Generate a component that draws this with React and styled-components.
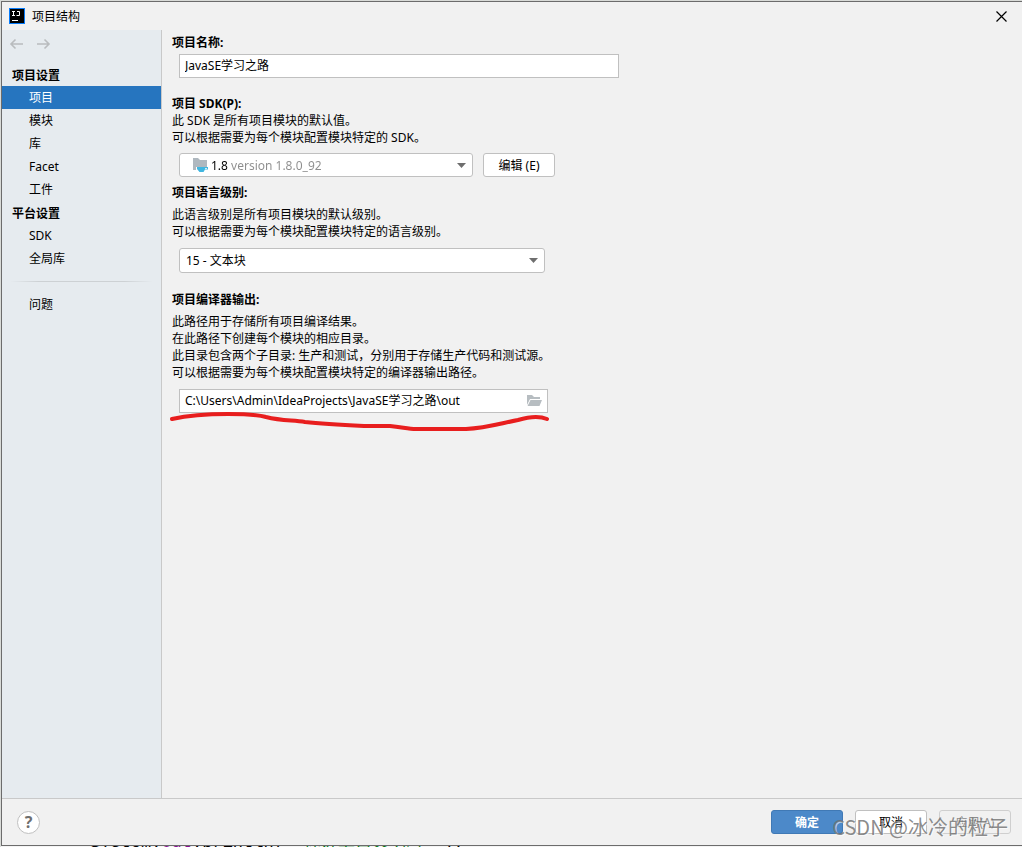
import { useState } from 'react'
import styled, { createGlobalStyle, css } from 'styled-components'

const GlobalStyle = createGlobalStyle`
  :root {
    --color-ui: #f1f1f1;
    --color-side: #e6ebef;
    --color-line: #c9c9c9;
    --color-border: #c0c0c0;
    --color-accent: #2675bf;
    --fs: 12px;
  }

  * {
    box-sizing: border-box;
  }

  body {
    margin: 0;
    color: #000;
    background-color: #d9dbd8;
    font-family: 'Noto Sans', 'Noto Sans CJK SC', sans-serif;
    font-size: var(--fs);
    line-height: 17px;
  }

  button, input, select {
    margin: 0;
    color: inherit;
    font: inherit;
  }
`

const Desktop = styled.div`
  display: flex;
  flex-direction: column;
  height: 100vh;
  padding: 1px 0 0 1px;
  overflow: hidden;
`

const Dialog = styled.div`
  position: relative;
  display: flex;
  flex: 1;
  flex-direction: column;
  min-height: 0;
  border: 1px solid #6c6c6c;
  border-right: 0;
  background-color: var(--color-ui);
`

// the editor line that shows under the dialog
const CodeStrip = styled.div`
  display: flex;
  align-items: flex-end;
  height: 1px;
  padding-left: 89px;
  overflow: hidden;
  background-color: #f4f4f4;
  font-family: 'Liberation Mono', 'Noto Sans CJK SC', monospace;
  font-size: 17px;
  line-height: 9px;
  white-space: pre;
`

const CodeField = styled.span`
  color: #871094;
`

const CodeString = styled.span`
  margin-left: 10px;
  color: #067d17;
`

const TitleBar = styled.header`
  display: flex;
  align-items: center;
  height: 28px;
  padding: 0 15px 0 7px;
`

const Title = styled.h1`
  flex: 1;
  margin: 0 0 0 7px;
  font-size: var(--fs);
  font-weight: 400;
`

const IconButton = styled.button`
  display: flex;
  padding: 0;
  border: 0;
  background: none;
`

const Body = styled.div`
  display: flex;
  flex: 1;
  min-height: 0;
`

const Sidebar = styled.nav`
  width: 160px;
  border-right: 1px solid var(--color-line);
  background-color: var(--color-side);
`

const History = styled.div`
  display: flex;
  gap: 12px;
  height: 33px;
  padding: 7px 7px 0;
`

const NavHeading = styled.h2`
  margin: 0;
  padding: 2px 0 0 10px;
  font-size: var(--fs);
  font-weight: 700;
  line-height: 21px;
`

const NavList = styled.ul`
  margin: 0;
  padding: 0;
  list-style: none;
`

const NavLink = styled.a`
  display: block;
  padding-left: 27px;
  color: inherit;
  line-height: 23px;
  text-decoration: none;

  ${({$active}) => $active && css`
    color: #fff;
    background-color: var(--color-accent);
  `}
`

const Divider = styled.hr`
  height: 1px;
  margin: 11px 8px;
  border: 0;
  background: linear-gradient(to right, transparent, #cdd1d4 20%, #cdd1d4 80%, transparent);
`

const Main = styled.main`
  flex: 1;
  min-width: 0;
  padding: 4px 10px;
`

const Section = styled.section`
  margin-bottom: ${({$gap}) => $gap}px;
`

const Label = styled.label`
  display: block;
  font-weight: 700;
`

const Hint = styled.p`
  margin: ${({$top}) => $top || 0}px 0 0;
`

const Controls = styled.div`
  display: flex;
  gap: 10px;
  margin-top: ${({$top}) => $top}px;
  padding-left: 7px;
`

const Field = styled.div`
  display: flex;
  align-items: center;
  width: 100%;
  max-width: ${({$width}) => $width}px;
  height: 24px;
  padding-right: 5px;
  border: 1px solid var(--color-border);
  background-color: #fff;
`

const Input = styled.input`
  flex: 1;
  min-width: 0;
  padding: 0 5px 2px;
  border: 0;
  outline: 0;
  background: none;
`

const SelectBox = styled(Field)`
  height: ${({$height}) => $height}px;
  padding: 0 6px;
  border-radius: 3px;
`

const Select = styled.select`
  flex: 1;
  min-width: 0;
  padding: 0;
  border: 0;
  outline: 0;
  appearance: none;
  background: none;
`

// version number is black, the rest of the option is grey
const SdkSelect = styled(Select)`
  margin: 0 0 0 3px;
  background: linear-gradient(to right, #000 19px, #8c8c8c 19px);
  background-clip: text;
  -webkit-text-fill-color: transparent;
`

const Button = styled.button`
  width: 72px;
  height: 24px;
  padding: 0;
  border: 1px solid var(--color-border);
  border-radius: 3px;
  background-color: #fff;

  ${({$primary}) => $primary && css`
    color: #fff;
    border-color: #4079b5;
    background-color: #4c89c9;
    font-weight: 700;
  `}

  &:disabled {
    color: #8c8c8c;
    border-color: #cfcfcf;
    background-color: var(--color-ui);
  }
`

const Footer = styled.footer`
  display: flex;
  align-items: center;
  gap: 12px;
  height: 47px;
  padding: 0 11px 0 15px;
  border-top: 1px solid var(--color-line);
`

const HelpButton = styled.button`
  width: 23px;
  height: 23px;
  margin-right: auto;
  padding: 0;
  border: 1px solid var(--color-border);
  border-radius: 50%;
  color: #6e6e6e;
  background-color: #fff;
  font-size: 16px;
  font-weight: 700;
`

const OutputField = styled.div`
  position: relative;
  flex: 1;
  max-width: 369px;
`

const Marker = styled.svg`
  position: absolute;
  top: 22px;
  left: -11px;
  pointer-events: none;
`

const Watermark = styled.div`
  position: absolute;
  right: 14px;
  bottom: 4px;
  color: rgba(110, 110, 110, 0.8);
  font-family: 'Noto Sans CJK SC', sans-serif;
  font-size: 20px;
  font-weight: 400;
  line-height: 28px;
  text-shadow: 1px 1px 0 rgba(255, 255, 255, 0.6);
  pointer-events: none;
`

const Logo = () => (
  <svg width="16" height="16" viewBox="0 0 16 16" aria-hidden="true">
    <path fill="#087cfa" d="M0 0h16v16H0z"/>
    <path d="M1 1h14v14H1z"/>
    <path stroke="#fff" fill="none" d="M3 3.5h3M4.500 3v5M3 7.500h3M8 3.500h2.500V7.500H7.500M3 12.500h6"/>
  </svg>
)

const CloseIcon = () => (
  <svg width="11" height="11" viewBox="0 0 11 11" stroke="#000" strokeWidth="1.2">
    <path d="M.5.5l10 10M10.500.5l-10 10"/>
  </svg>
)

const ArrowIcon = ({flip}) => (
  <svg width="15" height="14" viewBox="0 0 15 14" fill="none" stroke="#b9bcbe" strokeWidth="1.600">
    <path d={flip ? 'M1 7h12M8.500 2.500L13 7l-4.500 4.500' : 'M14 7H2M6.500 2.500L2 7l4.500 4.500'}/>
  </svg>
)

const ChevronIcon = () => (
  <svg width="9" height="5" viewBox="0 0 9 5" aria-hidden="true">
    <path fill="#6e6e6e" d="M0 0h9L4.500 5z"/>
  </svg>
)

const SdkIcon = styled.svg.attrs({
  width: 16,
  height: 16,
  viewBox: '0 0 16 16',
  'aria-hidden': true,
  children: (
    <>
      <path fill="#afb8bf" d="M1 1h5l2 2h7v7H4v3H1z"/>
      <path fill="#40b6e0" d="M5 10h11v2.500h-3L11.500 15h-4L5 12z"/>
      <path fill="#fff" d="M13 11h2v.8h-2z"/>
    </>
  ),
})`
  margin-left: 6px;
`

const FolderIcon = () => (
  <svg width="15" height="12" viewBox="0 0 15 12">
    <path fill="#b7bdc1" d="M0 0h5l2 2h6v2H3L0 10zM3.500 5H15l-2.500 6H.5z"/>
  </svg>
)

const projectLinks = ['项目', '模块', '库', 'Facet', '工件']
const platformLinks = ['SDK', '全局库']

const NavGroup = ({items, active, onSelect}) => (
  <NavList>
    {items.map(el => (
      <li key={el}>
        <NavLink href="#" $active={el === active} onClick={() => onSelect(el)}>{el}</NavLink>
      </li>
    ))}
  </NavList>
)

const App = () => {
  const [active, setActive] = useState('项目')

  return (
    <Desktop>
      <GlobalStyle/>
      <Dialog>
        <TitleBar>
          <Logo/>
          <Title>项目结构</Title>
          <IconButton aria-label="关闭"><CloseIcon/></IconButton>
        </TitleBar>
        <Body>
          <Sidebar>
            <History>
              <IconButton aria-label="后退"><ArrowIcon/></IconButton>
              <IconButton aria-label="前进"><ArrowIcon flip/></IconButton>
            </History>
            <NavHeading>项目设置</NavHeading>
            <NavGroup items={projectLinks} active={active} onSelect={setActive}/>
            <NavHeading>平台设置</NavHeading>
            <NavGroup items={platformLinks} active={active} onSelect={setActive}/>
            <Divider/>
            <NavGroup items={['问题']} active={active} onSelect={setActive}/>
          </Sidebar>
          <Main>
            <Section $gap={17}>
              <Label htmlFor="name">项目名称:</Label>
              <Controls $top={3}>
                <Field $width={440}>
                  <Input id="name" defaultValue="JavaSE学习之路"/>
                </Field>
              </Controls>
            </Section>
            <Section $gap={7}>
              <Label htmlFor="sdk">项目 SDK(P):</Label>
              <Hint>
                此 SDK 是所有项目模块的默认值。<br/>
                可以根据需要为每个模块配置模块特定的 SDK。
              </Hint>
              <Controls $top={7}>
                <SelectBox $width={294} $height={24}>
                  <SdkIcon/>
                  <SdkSelect id="sdk">
                    <option>1.8 version 1.8.0_92</option>
                  </SdkSelect>
                  <ChevronIcon/>
                </SelectBox>
                <Button>编辑 (E)</Button>
              </Controls>
            </Section>
            <Section $gap={18}>
              <Label htmlFor="level">项目语言级别:</Label>
              <Hint $top={5}>
                此语言级别是所有项目模块的默认级别。<br/>
                可以根据需要为每个模块配置模块特定的语言级别。
              </Hint>
              <Controls $top={8}>
                <SelectBox $width={366} $height={25}>
                  <Select id="level">
                    <option>15 - 文本块</option>
                  </Select>
                  <ChevronIcon/>
                </SelectBox>
              </Controls>
            </Section>
            <Section $gap={0}>
              <Label htmlFor="output">项目编译器输出:</Label>
              <Hint $top={5}>
                此路径用于存储所有项目编译结果。<br/>
                在此路径下创建每个模块的相应目录。<br/>
                此目录包含两个子目录: 生产和测试，分别用于存储生产代码和测试源。<br/>
                可以根据需要为每个模块配置模块特定的编译器输出路径。
              </Hint>
              <Controls $top={8}>
                <OutputField>
                  <Field>
                    <Input id="output" defaultValue="C:\Users\Admin\IdeaProjects\JavaSE学习之路\out"/>
                    <IconButton aria-label="浏览"><FolderIcon/></IconButton>
                  </Field>
                  <Marker width="384" height="24" viewBox="0 0 384 24" fill="none" stroke="#e81e1e" strokeWidth="4" strokeLinecap="round" strokeLinejoin="round" aria-hidden="true">
                    <path d="M4 8C22 4 40 3 60 3C76 3 88 3 98 6C114 10 124 9 137 11C155 13 175 14 196 15H222C234 16 240 18 248 18H298C318 17 334 12 350 9C360 6 372 5 379 8"/>
                  </Marker>
                </OutputField>
              </Controls>
            </Section>
          </Main>
        </Body>
        <Footer>
          <HelpButton aria-label="帮助">?</HelpButton>
          <Button $primary>确定</Button>
          <Button>取消</Button>
          <Button disabled>应用(A)</Button>
        </Footer>
        <Watermark>CSDN @冰冷的粒子</Watermark>
      </Dialog>
      <CodeStrip aria-hidden="true">
        System.<CodeField>out</CodeField>.println(<CodeString>"你好上古文明时"</CodeString> );
      </CodeStrip>
    </Desktop>
  )
}

export default App
